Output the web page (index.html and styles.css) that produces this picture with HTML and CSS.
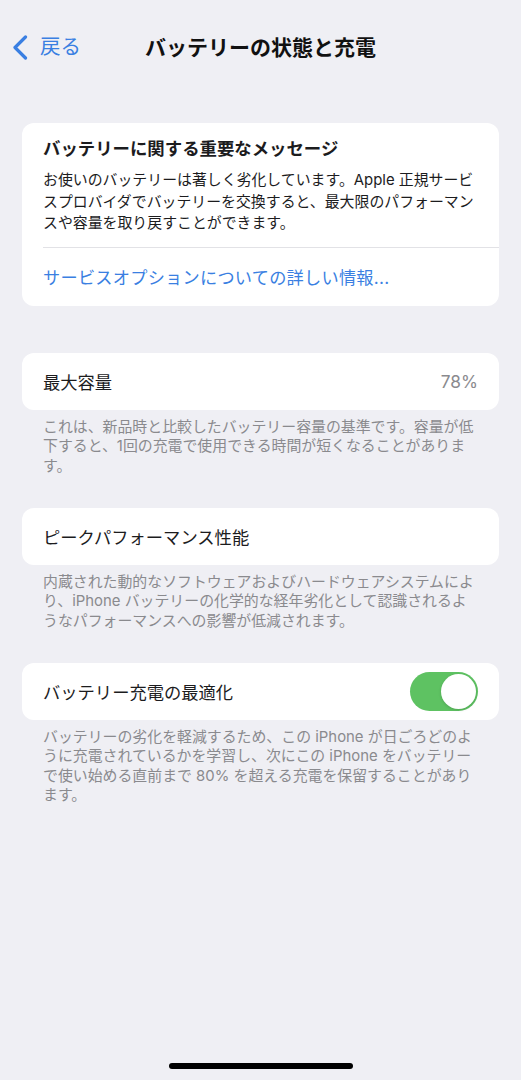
FILE: index.html
```html
<!DOCTYPE html>
<html lang="ja">
<head>
<meta charset="utf-8">
<link rel="stylesheet" href="styles.css">
</head>
<body>
<div class="screen">
  <header class="nav">
    <div class="back">
      <svg class="chev" width="16" height="25" viewBox="0 0 16 25"><path d="M13.5 2 L3 12.5 L13.5 23" fill="none" stroke="#3a7fe2" stroke-width="3.2" stroke-linecap="round" stroke-linejoin="round"/></svg>
      <span class="back-label">戻る</span>
    </div>
    <h1 class="nav-title">バッテリーの状態と充電</h1>
    <div></div>
  </header>

  <section class="card msg">
    <h2 class="msg-title">バッテリーに関する重要なメッセージ</h2>
    <p class="msg-body">お使いのバッテリーは著しく劣化しています。Apple 正規サービ<br>スプロバイダでバッテリーを交換すると、最大限のパフォーマン<br>スや容量を取り戻すことができます。</p>
    <div class="divider"></div>
    <div class="link">サービスオプションについての詳しい情報...</div>
  </section>

  <section class="card row">
    <span class="label">最大容量</span>
    <span class="value">78%</span>
  </section>
  <p class="footer">これは、新品時と比較したバッテリー容量の基準です。容量が低<br>下すると、1回の充電で使用できる時間が短くなることがありま<br>す。</p>

  <section class="card row">
    <span class="label">ピークパフォーマンス性能</span>
  </section>
  <p class="footer">内蔵された動的なソフトウェアおよびハードウェアシステムによ<br>り、iPhone バッテリーの化学的な経年劣化として認識されるよ<br>うなパフォーマンスへの影響が低減されます。</p>

  <section class="card row">
    <span class="label">バッテリー充電の最適化</span>
    <span class="toggle"><span class="knob"></span></span>
  </section>
  <p class="footer">バッテリーの劣化を軽減するため、この iPhone が日ごろどのよ<br>うに充電されているかを学習し、次にこの iPhone をバッテリー<br>で使い始める直前まで 80% を超える充電を保留することがあり<br>ます。</p>

  <div class="home"></div>
</div>
</body>
</html>
```

FILE: styles.css
```css
* { box-sizing: border-box; }
html, body { margin: 0; padding: 0; }
body {
  background: #efeff4;
  font-family: "Inter", "Noto Sans CJK JP", sans-serif;
  color: #1c1c1e;
}
.screen {
  width: 521px;
  min-height: 1080px;
  display: flex;
  flex-direction: column;
}
.nav {
  display: grid;
  grid-template-columns: 1fr auto 1fr;
  align-items: center;
  height: 36px;
  margin-top: 29px;
  margin-bottom: 58px;
}
.back {
  display: flex;
  align-items: center;
  gap: 12px;
  padding-left: 12px;
}
.chev { display: block; }
.back-label {
  font-size: 20.5px;
  color: #3a7fe2;
  line-height: 1;
}
.nav-title {
  margin: 0;
  font-size: 21px;
  font-weight: 700;
  line-height: 1;
  color: #111;
}
.card {
  background: #fff;
  margin: 0 22px;
  border-radius: 12px;
}
.msg {
  padding: 14px 0 16px 21px;
}
.msg-title {
  margin: 0;
  font-size: 17.4px;
  font-weight: 700;
  line-height: 24px;
}
.msg-body {
  margin: 9px 0 0;
  font-size: 14.9px;
  line-height: 21.5px;
  color: #1c1c1e;
}
.divider {
  height: 1px;
  background: #e2e2e6;
  margin-top: 12px;
}
.link {
  margin-top: 18px;
  font-size: 17.2px;
  letter-spacing: 0.25px;
  line-height: 24px;
  color: #3a7fe2;
}
.row {
  height: 57px;
  display: flex;
  align-items: center;
  justify-content: space-between;
  padding: 0 21px;
}
.msg + .row { margin-top: 47px; }
.label {
  font-size: 17.3px;
  color: #1c1c1e;
}
.value {
  font-size: 17.3px;
  color: #8a8a8e;
}
.footer {
  margin: 8px 22px 31.5px;
  padding: 0 21px;
  font-size: 14.9px;
  line-height: 19.5px;
  color: #8a8a8e;
}
.toggle {
  width: 68px;
  height: 39px;
  border-radius: 20px;
  background: #5ec262;
  display: flex;
  justify-content: flex-end;
  align-items: center;
  padding: 2px;
}
.knob {
  width: 35px;
  height: 35px;
  border-radius: 50%;
  background: #fff;
  box-shadow: 0 1px 3px rgba(0,0,0,0.15);
}
.home {
  margin: auto auto 11px;
  width: 184px;
  height: 6px;
  border-radius: 3px;
  background: #000;
}
```
